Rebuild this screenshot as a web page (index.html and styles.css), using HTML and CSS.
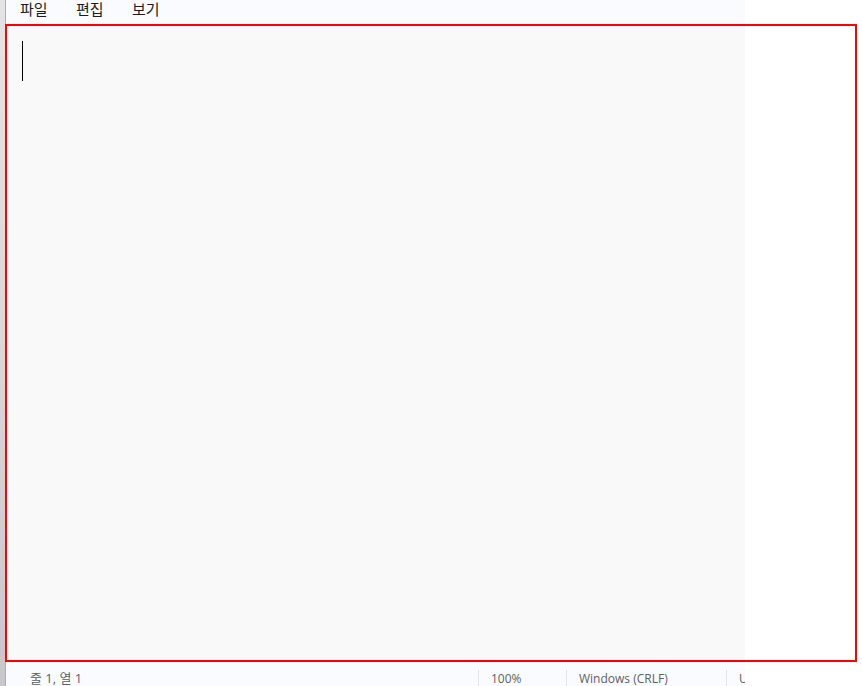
FILE: index.html
```html
<!DOCTYPE html>
<html lang="ko">
<head>
<meta charset="utf-8">
<meta name="viewport" content="width=device-width, initial-scale=1">
<title>메모장</title>
<link rel="stylesheet" href="styles.css">
</head>
<body>
<div class="desktop-edge"></div>
<main class="window">
  <nav class="menubar">
    <button type="button" class="menu">파일</button>
    <button type="button" class="menu">편집</button>
    <button type="button" class="menu">보기</button>
  </nav>
  <div class="editor">
    <textarea class="document" aria-label="텍스트 편집기" spellcheck="false"></textarea>
    <span class="caret"></span>
  </div>
  <footer class="statusbar">
    <span class="status position">줄 1, 열 1</span>
    <span class="status zoom">100%</span>
    <span class="status line-ending">Windows (CRLF)</span>
    <span class="status encoding">U</span>
  </footer>
</main>
<div class="highlight"></div>
</body>
</html>
```
FILE: styles.css
```css
* {
  box-sizing: border-box;
}

body {
  position: relative;
  display: flex;
  height: 100vh;
  margin: 0;
  padding-right: 117px;
  overflow: hidden;
  background: #fff;
  font-family: "Open Sans", "Noto Sans CJK KR", sans-serif;
}

.desktop-edge {
  flex: 0 0 5px;
  background: linear-gradient(#e4e4e5, #d8d8d9 50%, #c8c8ca);
}

.window {
  flex: 1;
  display: flex;
  flex-direction: column;
  min-width: 0;
  overflow: hidden;
  border-left: 1px solid #adadae;
  background: #fafbfe;
}

.menubar {
  display: flex;
  flex: 0 0 25px;
  align-items: flex-start;
  padding-left: 4px;
}

.menu {
  width: 56px;
  height: 18px;
  padding: 0 0 0 10px;
  border: 0;
  background: none;
  color: #1b1b1b;
  font-family: "Noto Sans CJK KR", sans-serif;
  font-size: 15px;
  font-weight: 400;
  line-height: 18px;
  text-align: left;
}

.editor {
  position: relative;
  flex: 1;
  display: flex;
  background: #f9f9f9;
}

.document {
  flex: 1;
  min-width: 0;
  padding: 16px;
  border: 0;
  outline: 0;
  resize: none;
  background: transparent;
  font-family: "Noto Sans CJK KR", sans-serif;
  font-size: 30px;
  line-height: 40px;
}

.caret {
  position: absolute;
  top: 16px;
  left: 16px;
  width: 1px;
  height: 40px;
  background: #000;
}

.statusbar {
  display: flex;
  flex: 0 0 25px;
  padding-top: 9px;
  overflow: hidden;
  color: #606164;
  font-size: 12px;
  line-height: 17px;
  white-space: nowrap;
}

.status {
  flex: none;
  padding-left: 12px;
  border-left: 1px solid #e2e3e6;
}

.position {
  flex: 1;
  padding-left: 24px;
  border-left: 0;
  font-size: 13px;
}

.zoom {
  width: 88px;
}

.line-ending {
  width: 160px;
}

.encoding {
  width: 19px;
  overflow: hidden;
}

.highlight {
  position: absolute;
  inset: 24px 5px;
  border: 2px solid #f00;
  pointer-events: none;
}
```
